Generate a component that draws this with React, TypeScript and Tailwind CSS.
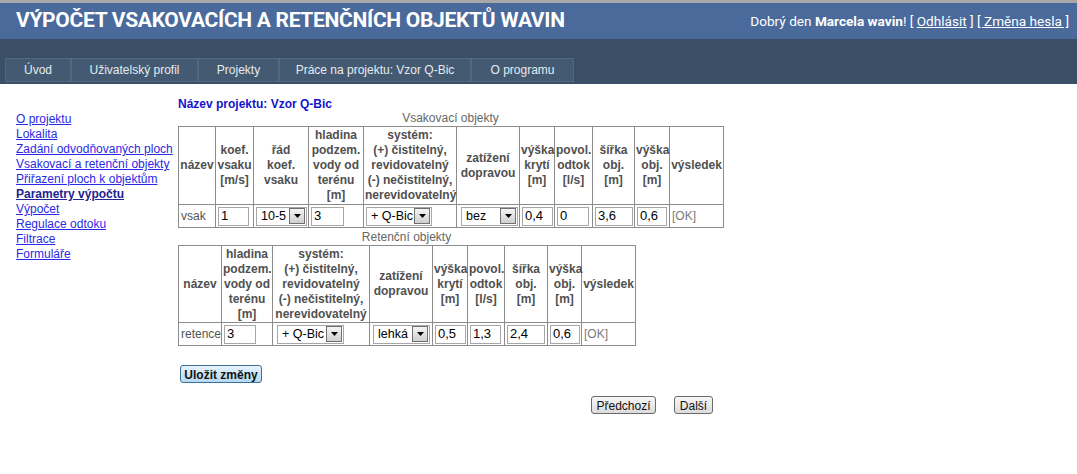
import type { ReactNode } from "react";

// Stránka "Parametry výpočtu" – dvě tabulky objektů (vsakovací / retenční).

const TABS: [string, string][] = [
  ["Úvod", "w-[66px]"],
  ["Uživatelský profil", "w-[127px]"],
  ["Projekty", "w-[81px]"],
  ["Práce na projektu: Vzor Q-Bic", "w-[192px]"],
  ["O programu", "w-[103px]"],
];

const SIDE_LINKS = [
  "O projektu",
  "Lokalita",
  "Zadání odvodňovaných ploch",
  "Vsakovací a retenční objekty",
  "Přiřazení ploch k objektům",
  "Parametry výpočtu",
  "Výpočet",
  "Regulace odtoku",
  "Filtrace",
  "Formuláře",
];

function Th({ lines }: { lines: string[] }) {
  return (
    <th className="border border-[#8c8c8c] px-px text-center align-middle font-bold leading-[15px] whitespace-nowrap text-[#505050]">
      {lines.map((l, i) => (
        <span key={i}>
          {i > 0 && <br />}
          {l}
        </span>
      ))}
    </th>
  );
}

function Td({ children }: { children?: ReactNode }) {
  return <td className="border border-[#8c8c8c] px-[2px] py-0 align-middle whitespace-nowrap">{children}</td>;
}

function Field({ value, className }: { value: string; className: string }) {
  return (
    <input
      readOnly
      defaultValue={value}
      className={`h-[19px] border border-[#a7a7a7] bg-white px-[2px] text-[13px] text-black outline-none ${className}`}
    />
  );
}

function Sel({ value, className }: { value: string; className: string }) {
  return (
    <span className={`flex h-[19px] items-center border border-[#a7a7a7] bg-white pl-[4px] text-[12.5px] text-black ${className}`}>
      <span className="flex-1">{value}</span>
      <span className="mr-px flex h-[16px] w-[16px] items-center justify-center border border-[#6f6f6f] bg-linear-to-b from-[#f4f4f4] to-[#cfcfcf]">
        <svg width="7" height="4" viewBox="0 0 7 4">
          <path d="M0 0h7L3.5 4z" fill="#000" />
        </svg>
      </span>
    </span>
  );
}

const H_SYSTEM = ["systém:", "(+) čistitelný,", "revidovatelný", "(-) nečistitelný,", "nerevidovatelný"];
const H_HLADINA = ["hladina", "podzem.", "vody od", "terénu", "[m]"];
const H_REST = [
  ["zatížení", "dopravou"],
  ["výška", "krytí", "[m]"],
  ["povol.", "odtok", "[l/s]"],
  ["šířka", "obj.", "[m]"],
  ["výška", "obj.", "[m]"],
  ["výsledek"],
];

export default function App() {
  return (
    <div className="min-h-screen w-full bg-white font-['Liberation_Sans',Arial,sans-serif] text-[12px]">
      <div className="h-[3px] bg-[#a8a8a8]" />
      <header className="flex h-[36px] items-center justify-between bg-[#4a6a9c] pr-[8px] pl-[16px] text-white">
        <h1 className="font-['Roboto',sans-serif] text-[21px] font-bold tracking-[-0.3px]">
          VÝPOČET VSAKOVACÍCH A RETENČNÍCH OBJEKTŮ WAVIN
        </h1>
        <div className="font-['Roboto',sans-serif] text-[13.6px]">
          Dobrý den <b>Marcela wavin</b>! [ <span className="underline">Odhlásit</span> ]{" "}
          <span className="underline">[ Změna hesla ]</span>
        </div>
      </header>
      <nav className="flex h-[45px] items-end bg-[#3a4f66] pb-[2px] pl-[5px]">
        {TABS.map(([label, w]) => (
          <span
            key={label}
            className={`flex h-[24px] items-center justify-center border border-[#51697f] bg-[#435a72] text-[12px] text-[#e6ebf0] ${w}`}
          >
            {label}
          </span>
        ))}
      </nav>

      <div className="flex">
        <aside className="w-[178px] shrink-0 pt-[28px] pl-[16px] leading-[15px]">
          {SIDE_LINKS.map((l) =>
            l === "Parametry výpočtu" ? (
              <div key={l} className="font-bold text-[#23238f] underline">{l}</div>
            ) : (
              <div key={l} className="text-[#2a2ae6] underline">{l}</div>
            )
          )}
        </aside>

        <main className="pt-[13px]">
          <div className="leading-[14px] font-bold text-[#1414cc]">Název projektu: Vzor Q-Bic</div>

          <div className="w-[545px] text-center leading-[15px] text-[#666]">Vsakovací objekty</div>
          <table className="w-[545px] table-fixed border-collapse">
            <colgroup>
              <col className="w-[37px]" />
              <col className="w-[38px]" />
              <col className="w-[55px]" />
              <col className="w-[55px]" />
              <col className="w-[93px]" />
              <col className="w-[63px]" />
              <col className="w-[35px]" />
              <col className="w-[38px]" />
              <col className="w-[42px]" />
              <col className="w-[35px]" />
              <col className="w-[54px]" />
            </colgroup>
            <thead>
              <tr className="h-[78px]">
                <Th lines={["název"]} />
                <Th lines={["koef.", "vsaku", "[m/s]"]} />
                <Th lines={["řád", "koef.", "vsaku"]} />
                <Th lines={H_HLADINA} />
                <Th lines={H_SYSTEM} />
                {H_REST.map((h, i) => (
                  <Th key={i} lines={h} />
                ))}
              </tr>
            </thead>
            <tbody>
              <tr className="h-[23px]">
                <Td><span className="text-[#555]">vsak</span></Td>
                <Td><Field value="1" className="w-[31px]" /></Td>
                <Td><Sel value="10-5" className="w-[51px]" /></Td>
                <Td><Field value="3" className="w-[33px]" /></Td>
                <Td><Sel value="+ Q-Bic" className="w-[66px]" /></Td>
                <Td><Sel value="bez" className="ml-[2px] w-[57px]" /></Td>
                <Td><Field value="0,4" className="w-[31px]" /></Td>
                <Td><Field value="0" className="w-[32px]" /></Td>
                <Td><Field value="3,6" className="w-[38px]" /></Td>
                <Td><Field value="0,6" className="w-[30px]" /></Td>
                <Td><span className="text-[#7a7a7a]">[OK]</span></Td>
              </tr>
            </tbody>
          </table>

          <div className="mt-[2px] w-[457px] text-center leading-[15px] text-[#666]">Retenční objekty</div>
          <table className="w-[457px] table-fixed border-collapse">
            <colgroup>
              <col className="w-[43px]" />
              <col className="w-[51px]" />
              <col className="w-[97px]" />
              <col className="w-[63px]" />
              <col className="w-[35px]" />
              <col className="w-[37px]" />
              <col className="w-[43px]" />
              <col className="w-[34px]" />
              <col className="w-[54px]" />
            </colgroup>
            <thead>
              <tr className="h-[77px]">
                <Th lines={["název"]} />
                <Th lines={H_HLADINA} />
                <Th lines={H_SYSTEM} />
                {H_REST.map((h, i) => (
                  <Th key={i} lines={h} />
                ))}
              </tr>
            </thead>
            <tbody>
              <tr className="h-[23px]">
                <Td><span className="text-[#555]">retence</span></Td>
                <Td><Field value="3" className="w-[32px]" /></Td>
                <Td><Sel value="+ Q-Bic" className="ml-[2px] w-[67px]" /></Td>
                <Td><Sel value="lehká" className="ml-px w-[57px]" /></Td>
                <Td><Field value="0,5" className="w-[31px]" /></Td>
                <Td><Field value="1,3" className="w-[31px]" /></Td>
                <Td><Field value="2,4" className="w-[38px]" /></Td>
                <Td><Field value="0,6" className="w-[30px]" /></Td>
                <Td><span className="text-[#7a7a7a]">[OK]</span></Td>
              </tr>
            </tbody>
          </table>

          <button className="mt-[19px] ml-[2px] h-[18px] w-[82px] rounded-[3px] border border-[#3d6f9b] bg-linear-to-b from-[#e6f3fd] to-[#b6d8f2] text-[12px] font-bold text-[#111]">
            Uložit změny
          </button>

          <div className="mt-[12px] flex w-[535px] justify-end gap-[18px]">
            <button className="h-[18px] w-[65px] rounded-[3px] border border-[#6b6b6b] bg-linear-to-b from-[#f7f7f7] to-[#dcdcdc] text-[12px] text-[#111]">
              Předchozí
            </button>
            <button className="h-[18px] w-[39px] rounded-[3px] border border-[#6b6b6b] bg-linear-to-b from-[#f7f7f7] to-[#dcdcdc] text-[12px] text-[#111]">
              Další
            </button>
          </div>
        </main>
      </div>
    </div>
  );
}
